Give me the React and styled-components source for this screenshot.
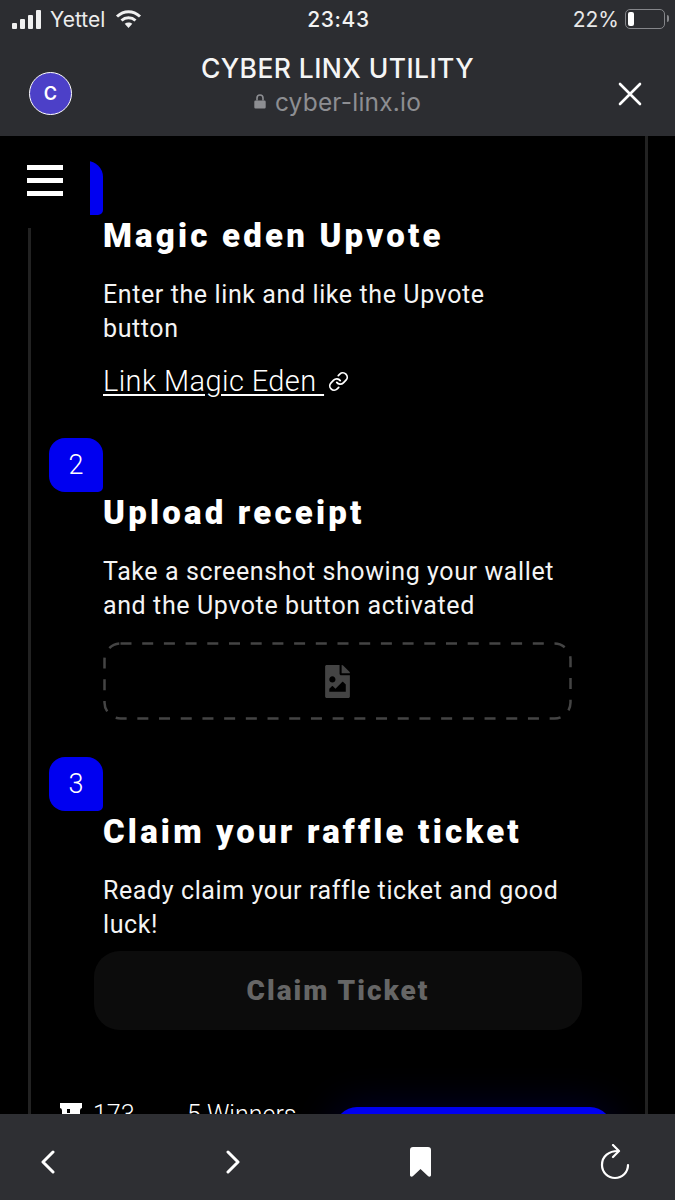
import React from "react";
import styled, { createGlobalStyle } from "styled-components";
import { FaFileImage } from "react-icons/fa";
import { Link as LinkIcon } from "lucide-react";

const Global = createGlobalStyle`
  html, body { margin: 0; padding: 0; background: #000; }
  * { box-sizing: border-box; }
`;

const Screen = styled.div`
  width: 675px; height: 1200px; display: flex; flex-direction: column;
  overflow: hidden; background: #000; color: #fff;
  font-family: Roboto, "Liberation Sans", sans-serif;
`;
const Chrome = styled.header`
  height: 136px; flex: none; background: #2c2d31; display: flex; flex-direction: column;
  font-family: Inter, "Liberation Sans", sans-serif;
`;
const StatusBar = styled.div`
  height: 38px; display: grid; grid-template-columns: 1fr auto 1fr; align-items: center; padding: 0 10px 0 12px;
`;
const StatusLeft = styled.div`display: flex; align-items: center; font-size: 21px; color: #ececec;`;
const Carrier = styled.span`margin: 0 10px 0 9px;`;
const Time = styled.div`font-size: 21px; font-weight: 500; color: #f2f2f2; letter-spacing: .6px;`;
const StatusRight = styled.div`display: flex; justify-content: flex-end; align-items: center; gap: 6px; font-size: 21px; color: #e8e8e8;`;
const Battery = styled.div`
  width: 40px; height: 20px; border: 1.5px solid #85868a; border-radius: 5px; padding: 2px; position: relative;
  &::before { content: ""; display: block; width: 6px; height: 100%; background: #fff; border-radius: 2px; }
  &::after { content: ""; position: absolute; right: -5px; top: 5px; width: 2px; height: 7px; background: #85868a; border-radius: 0 2px 2px 0; }
`;
const TitleBar = styled.div`
  flex: 1; display: grid; grid-template-columns: 1fr auto 1fr; align-items: center; padding: 0 33px 0 29px;
`;
const Avatar = styled.div`
  width: 43px; height: 43px; border-radius: 50%; background: #4c40c8; border: 1.5px solid #fff;
  display: flex; align-items: center; justify-content: center; font-size: 18px; font-weight: 600; justify-self: start;
  margin-top: 13px;
`;
const TitleBlock = styled.div`display: flex; flex-direction: column; align-items: center; margin-top: -5px; padding-left: 4px;`;
const SiteTitle = styled.div`font-size: 26.500px; line-height: 34px; font-weight: 500; color: #f5f5f5; letter-spacing: .4px;`;
const SiteUrl = styled.div`display: flex; align-items: center; gap: 9px; font-size: 24.500px; line-height: 34px; color: #8d8e92; letter-spacing: .2px;`;
const CloseIcon = styled.svg`justify-self: end; margin-top: 13px;`;

const Viewport = styled.main`flex: 1; min-height: 0; position: relative; overflow: hidden; padding: 0 27px 0 28px; background: #000;`;
const MenuCover = styled.div`
  position: absolute; left: 0; top: 0; width: 90px; height: 92px; background: #000; z-index: 2;
  display: flex; flex-direction: column; gap: 8px; padding: 29px 0 0 27px;
`;
const MenuBar = styled.span`display: block; width: 36px; height: 5px; background: #fff;`;
const Panel = styled.div`
  border-left: 3px solid #222; border-right: 3px solid #222; height: 100%;
  padding: 25px 0 0 18px; display: flex; flex-direction: column;
`;
const Step = styled.section`display: flex; flex-direction: column; align-items: flex-start; margin-bottom: ${p => p.$gap}px;`;
const Badge = styled.div`
  width: 54px; height: 54px; background: #0000f0; border-radius: 16px 16px 5px 16px; flex: none;
  display: flex; align-items: center; justify-content: center; font-size: 27px; font-weight: 300;
`;
const StepBody = styled.div`margin-left: 54px; width: 469px; display: flex; flex-direction: column; align-items: flex-start;`;
const StepTitle = styled.h2`
  margin: 1px 0 22px; font-family: Roboto, sans-serif; font-weight: 900; font-size: 33px; line-height: 40px; letter-spacing: 3.200px; color: #fff;
`;
const StepText = styled.p`margin: 0; max-width: 458px; font-size: 25px; line-height: 34px; font-weight: 400; color: #f4f4f4; letter-spacing: .6px;`;
const ExternalLink = styled.a`
  margin-top: 18px; display: inline-flex; align-items: center; gap: 4px; font-size: 29px; line-height: 34px; font-weight: 300; color: #fff; letter-spacing: .4px;
`;
const LinkLabel = styled.span`text-decoration: underline; text-underline-offset: 3px; white-space: pre;`;
const DropZone = styled.div`
  position: relative; margin-top: 19px; width: 100%; height: 78px; display: flex; align-items: center; justify-content: center; color: #444;
`;
const DashFrame = styled.svg`position: absolute; inset: 0; width: 100%; height: 100%;`;
const ClaimButton = styled.button`
  margin: 9px 0 0 -9px; width: 488px; height: 79px; border: none; border-radius: 26px; background: #0c0c0c; color: #666;
  font-family: Roboto, sans-serif; font-weight: 900; font-size: 28px; letter-spacing: 2px;
`;
const Footer = styled.div`display: flex; align-items: flex-start; margin: 0 0 0 11px;`;
const Stat = styled.div`display: flex; align-items: flex-start; gap: 11px; font-size: 25px; line-height: 30px; font-weight: 300; width: 127px;`;
const Winners = styled(Stat)`width: 148px;`;
const TicketIcon = styled.svg`margin-top: 3px; flex: none;`;
const JoinButton = styled.div`
  width: 277px; height: 70px; margin-top: 7px; border-radius: 22px; background: #0000f0; box-shadow: 0 0 40px rgba(0,0,160,.28);
`;
const Toolbar = styled.nav`
  height: 86px; flex: none; background: #2e2f33; display: flex; gap: 169px;
  align-items: center; padding: 10px 0 0 40px; position: relative; z-index: 3;
`;

export default function App() {
  return (
    <Screen>
      <Global />
      <Chrome>
        <StatusBar>
          <StatusLeft>
            <svg width="29" height="19" viewBox="0 0 29 19" fill="#f0f0f0">
              <rect x="0" y="13" width="5" height="6" rx="1" />
              <rect x="8" y="9" width="5" height="10" rx="1" />
              <rect x="16" y="5" width="5" height="14" rx="1" />
              <rect x="24" y="0" width="5" height="19" rx="1" />
            </svg>
            <Carrier>Yettel</Carrier>
            <svg width="27" height="20" viewBox="0 0 27 20" fill="none" stroke="#f0f0f0" strokeWidth="3">
              <path d="M2 7.500C9 1 18 1 25 7.500" />
              <path d="M6.500 11.500c4-3.600 10-3.600 14 0" />
              <path d="M13.500 19l-3.800-4.200c2.200-1.800 5.400-1.800 7.600 0z" fill="#f0f0f0" stroke="none" />
            </svg>
          </StatusLeft>
          <Time>23:43</Time>
          <StatusRight>22%<Battery /></StatusRight>
        </StatusBar>
        <TitleBar>
          <Avatar>C</Avatar>
          <TitleBlock>
            <SiteTitle>CYBER LINX UTILITY</SiteTitle>
            <SiteUrl>
              <svg width="12" height="15" viewBox="0 0 12 15" fill="#8d8e92">
                <path d="M1.500 6.500h9a1.200 1.200 0 0 1 1.200 1.200v5.600a1.200 1.200 0 0 1-1.200 1.200h-9A1.200 1.200 0 0 1 .3 13.300V7.700a1.200 1.200 0 0 1 1.200-1.200z" />
                <path d="M3 6.500V4a3 3 0 0 1 6 0v2.500" fill="none" stroke="#8d8e92" strokeWidth="1.600" />
              </svg>
              cyber-linx.io
            </SiteUrl>
          </TitleBlock>
          <CloseIcon width="24" height="24" viewBox="0 0 24 24" fill="none" stroke="#fff" strokeWidth="2.600" strokeLinecap="round">
            <path d="M2 2l20 20M22 2L2 22" />
          </CloseIcon>
        </TitleBar>
      </Chrome>

      <Viewport>
        <MenuCover><MenuBar /><MenuBar /><MenuBar /></MenuCover>
        <Panel>
          <Step $gap={40}>
            <Badge>1</Badge>
            <StepBody>
              <StepTitle>Magic eden Upvote</StepTitle>
              <StepText>Enter the link and like the Upvote button</StepText>
              <ExternalLink>
                <LinkLabel>Link Magic Eden </LinkLabel>
                <LinkIcon size={21} strokeWidth={2} />
              </ExternalLink>
            </StepBody>
          </Step>
          <Step $gap={37}>
            <Badge>2</Badge>
            <StepBody>
              <StepTitle>Upload receipt</StepTitle>
              <StepText>Take a screenshot showing your wallet and the Upvote button activated</StepText>
              <DropZone>
                <DashFrame preserveAspectRatio="none" viewBox="0 0 469 78">
                  <rect x="1.500" y="1.500" width="466" height="75" rx="16" fill="none" stroke="#444" strokeWidth="2.500" strokeDasharray="11 10.700" />
                </DashFrame>
                <FaFileImage size={33} />
              </DropZone>
            </StepBody>
          </Step>
          <Step $gap={70}>
            <Badge>3</Badge>
            <StepBody>
              <StepTitle>Claim your raffle ticket</StepTitle>
              <StepText>Ready claim your raffle ticket and good luck!</StepText>
              <ClaimButton>Claim Ticket</ClaimButton>
            </StepBody>
          </Step>
          <Footer>
            <Stat>
              <TicketIcon width="22" height="17" viewBox="0 0 22 17" fill="#fff">
                <path d="M0 0h22v5a2.500 2.500 0 0 0-2 2.500V17H2V7.500A2.500 2.500 0 0 0 0 5z" />
                <rect x="7" y="6" width="3" height="4" fill="#000" />
              </TicketIcon>
              173
            </Stat>
            <Winners>5 Winners</Winners>
            <JoinButton />
          </Footer>
        </Panel>
      </Viewport>

      <Toolbar>
        <svg width="16" height="24" viewBox="0 0 16 24" fill="none" stroke="#fff" strokeWidth="3" strokeLinecap="round" strokeLinejoin="round"><path d="M13 2L3 12l10 10" /></svg>
        <svg width="16" height="24" viewBox="0 0 16 24" fill="none" stroke="#fff" strokeWidth="3" strokeLinecap="round" strokeLinejoin="round"><path d="M3 2l10 10L3 22" /></svg>
        <svg width="21" height="30" viewBox="0 0 21 30" fill="#fff"><path d="M3 0h15a3 3 0 0 1 3 3v25c0 1.600-1.600 2.200-2.800 1.200L10.500 22l-7.700 7.200C1.600 30.200 0 29.600 0 28V3a3 3 0 0 1 3-3z" /></svg>
        <svg width="30" height="36" viewBox="0 0 30 36" fill="none" stroke="#fff" strokeWidth="2.200" strokeLinecap="round" strokeLinejoin="round"><path d="M13 1l6 6-6 6" /><path d="M18 7C9 7 2 12 2 21a13 13 0 0 0 26 0" /></svg>
      </Toolbar>
    </Screen>
  );
}
